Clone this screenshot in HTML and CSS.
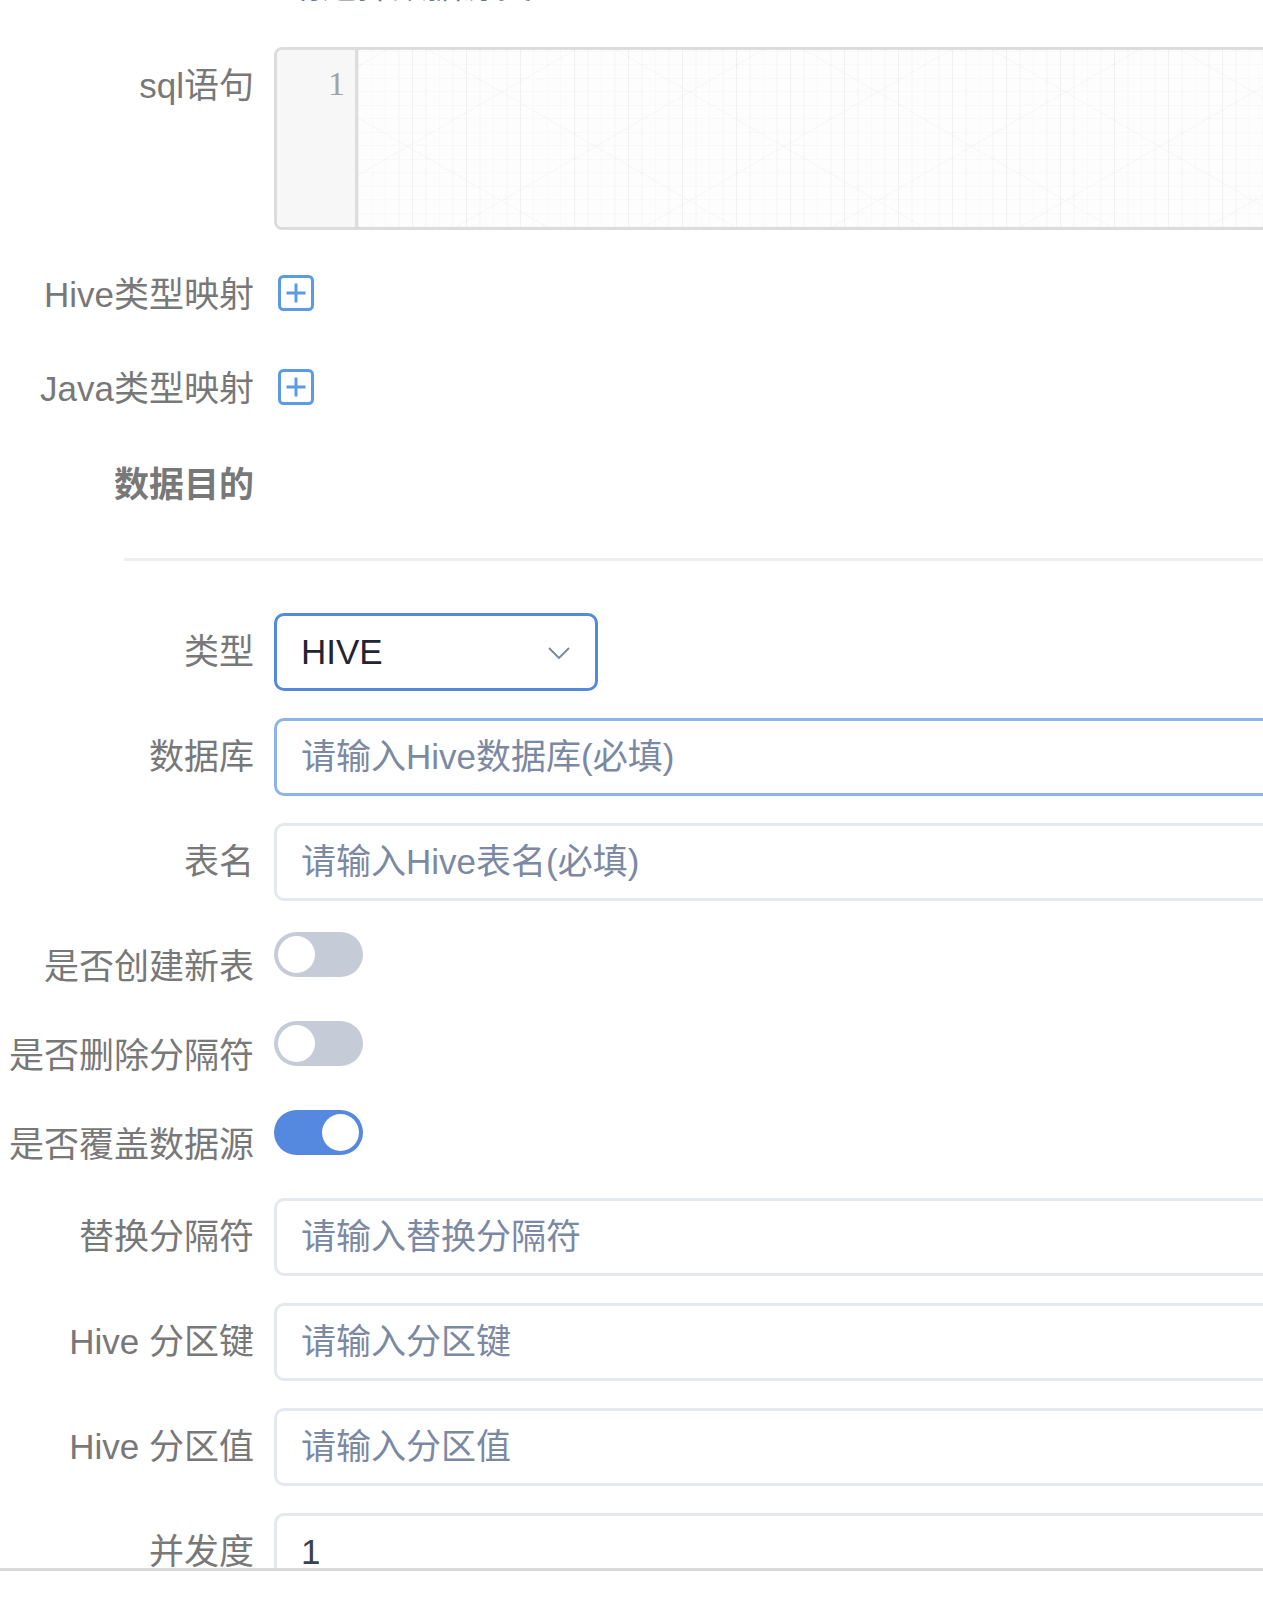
FILE: index.html
```html
<!DOCTYPE html>
<html lang="zh-CN">
<head>
<meta charset="utf-8">
<title>数据同步配置</title>
<link rel="stylesheet" href="styles.css">
</head>
<body>
<div class="viewport">
  <div class="form">
    <div class="prev"><span class="prev-text">请选择数据源类型</span></div>

    <div class="row row-editor">
      <div class="label">sql语句</div>
      <div class="content">
        <div class="editor">
          <div class="gutter"><div class="lineno">1</div></div>
          <div class="code"></div>
        </div>
      </div>
    </div>

    <div class="row row-map row-map-first">
      <div class="label">Hive类型映射</div>
      <div class="content">
        <span class="add-icon">
          <svg width="36" height="36" viewBox="0 0 36 36"><rect x="1.5" y="1.5" width="33" height="33" rx="4" fill="none" stroke="#5b9be6" stroke-width="3"/><path d="M8.5 18H27.5M18 8.5V27.5" stroke="#5b9be6" stroke-width="3" fill="none"/></svg>
        </span>
      </div>
    </div>

    <div class="row row-map row-map-second">
      <div class="label">Java类型映射</div>
      <div class="content">
        <span class="add-icon">
          <svg width="36" height="36" viewBox="0 0 36 36"><rect x="1.5" y="1.5" width="33" height="33" rx="4" fill="none" stroke="#5b9be6" stroke-width="3"/><path d="M8.5 18H27.5M18 8.5V27.5" stroke="#5b9be6" stroke-width="3" fill="none"/></svg>
        </span>
      </div>
    </div>

    <div class="row row-section">
      <div class="label label-bold">数据目的</div>
      <div class="content"></div>
    </div>

    <div class="divider"></div>

    <div class="row row-input">
      <div class="label">类型</div>
      <div class="content">
        <div class="select">
          <span class="select-value">HIVE</span>
          <svg class="chevron" width="22" height="12" viewBox="0 0 22 12"><polyline points="1,1 11,11 21,1" fill="none" stroke="#7d8ba5" stroke-width="2"/></svg>
        </div>
      </div>
    </div>

    <div class="row row-input">
      <div class="label">数据库</div>
      <div class="content">
        <div class="input input-hover"><span class="placeholder">请输入Hive数据库(必填)</span></div>
      </div>
    </div>

    <div class="row row-input row-before-switch">
      <div class="label">表名</div>
      <div class="content">
        <div class="input"><span class="placeholder">请输入Hive表名(必填)</span></div>
      </div>
    </div>

    <div class="row row-switch">
      <div class="label">是否创建新表</div>
      <div class="content"><span class="switch"><span class="knob"></span></span></div>
    </div>

    <div class="row row-switch">
      <div class="label">是否删除分隔符</div>
      <div class="content"><span class="switch"><span class="knob"></span></span></div>
    </div>

    <div class="row row-switch row-switch-last">
      <div class="label">是否覆盖数据源</div>
      <div class="content"><span class="switch switch-on"><span class="knob"></span></span></div>
    </div>

    <div class="row row-input">
      <div class="label">替换分隔符</div>
      <div class="content">
        <div class="input"><span class="placeholder">请输入替换分隔符</span></div>
      </div>
    </div>

    <div class="row row-input">
      <div class="label">Hive 分区键</div>
      <div class="content">
        <div class="input"><span class="placeholder">请输入分区键</span></div>
      </div>
    </div>

    <div class="row row-input">
      <div class="label">Hive 分区值</div>
      <div class="content">
        <div class="input"><span class="placeholder">请输入分区值</span></div>
      </div>
    </div>

    <div class="row row-input">
      <div class="label">并发度</div>
      <div class="content">
        <div class="input"><span class="value">1</span></div>
      </div>
    </div>
  </div>
</div>
<div class="footer"></div>
</body>
</html>
```

FILE: styles.css
```css
html, body {
  margin: 0;
  padding: 0;
  background: #ffffff;
}

body {
  width: 1263px;
  height: 1605px;
  overflow: hidden;
  font-family: "Liberation Sans", "Noto Sans CJK SC", sans-serif;
}

.viewport {
  height: 1571px;
  box-sizing: border-box;
  border-bottom: 3px solid #dadada;
  overflow: hidden;
}

.form {
  width: 1400px;
}

.prev {
  height: 5px;
  overflow: hidden;
  padding-left: 287px;
}

.prev-text {
  display: block;
  font-size: 35px;
  line-height: 40px;
  margin-top: -34px;
  color: #6a7690;
}

.row {
  display: flex;
  align-items: flex-start;
}

.label {
  flex: 0 0 274px;
  box-sizing: border-box;
  padding-right: 20px;
  text-align: right;
  font-size: 35px;
  line-height: 78px;
  color: #787878;
  white-space: nowrap;
}

.label-bold {
  font-weight: 700;
}

.content {
  flex: 0 0 1126px;
}

/* editor */
.row-editor {
  margin-top: 42px;
  margin-bottom: 26px;
}

.editor {
  display: flex;
  height: 183px;
  box-sizing: border-box;
  border: 3px solid #dcdcdc;
  border-radius: 8px;
  overflow: hidden;
}

.gutter {
  flex: 0 0 81px;
  box-sizing: border-box;
  background: #f7f7f7;
  border-right: 3px solid #dddddd;
  padding-top: 12px;
  padding-right: 10px;
  text-align: right;
}

.lineno {
  font-family: "Liberation Serif", "DejaVu Serif", serif;
  font-size: 34px;
  line-height: 44px;
  color: #a3a3a3;
}

.code {
  flex: 1;
  background-color: #fdfdfd;
  background-image:
    repeating-linear-gradient(90deg, rgba(0, 0, 0, 0.03) 0 1px, transparent 1px 54px),
    repeating-linear-gradient(30deg, rgba(0, 0, 0, 0.025) 0 1px, transparent 1px 94px),
    repeating-linear-gradient(-30deg, rgba(0, 0, 0, 0.025) 0 1px, transparent 1px 94px),
    repeating-linear-gradient(90deg, rgba(0, 0, 0, 0.015) 0 1px, transparent 1px 13.5px),
    repeating-linear-gradient(0deg, rgba(0, 0, 0, 0.015) 0 1px, transparent 1px 13.5px);
}

/* mapping rows */
.row-map {
  height: 78px;
}

.row-map-first {
  margin-bottom: 16px;
}

.row-map-second {
  margin-bottom: 18px;
}

.add-icon {
  display: block;
  width: 36px;
  height: 36px;
  margin-top: 19px;
  margin-left: 4px;
}

.add-icon svg {
  display: block;
}

.row-section {
  height: 78px;
}

.divider {
  margin: 34px 0 52px 124px;
  height: 3px;
  background: #eeeeee;
}

/* inputs */
.row-input {
  margin-bottom: 27px;
}

.row-before-switch {
  margin-bottom: 31px;
}

.input,
.select {
  height: 78px;
  box-sizing: border-box;
  border: 3px solid #e4e8ef;
  border-radius: 10px;
  padding: 0 24px;
  font-size: 35px;
  line-height: 72px;
  background: #ffffff;
  white-space: nowrap;
}

.input-hover {
  border-color: #8cb3ea;
}

.select {
  width: 324px;
  border-color: #5589e0;
  display: flex;
  align-items: center;
  justify-content: space-between;
  padding-right: 25px;
}

.select-value {
  color: #1f2533;
}

.chevron {
  display: block;
  margin-top: 2px;
}

.placeholder {
  color: #7b89a3;
}

.value {
  color: #3a404c;
}

/* switches */
.row-switch {
  height: 68px;
  margin-bottom: 21px;
}

.row-switch .label {
  line-height: 70px;
}

.row-switch-last {
  margin-bottom: 20px;
}

.switch {
  display: flex;
  align-items: center;
  width: 89px;
  height: 45px;
  box-sizing: border-box;
  padding: 0 4px;
  border-radius: 23px;
  background: #c6ccd7;
}

.knob {
  display: block;
  width: 37px;
  height: 37px;
  border-radius: 50%;
  background: #ffffff;
}

.switch-on {
  background: #5589e0;
  justify-content: flex-end;
}

.footer {
  height: 34px;
  background: #ffffff;
}
```
